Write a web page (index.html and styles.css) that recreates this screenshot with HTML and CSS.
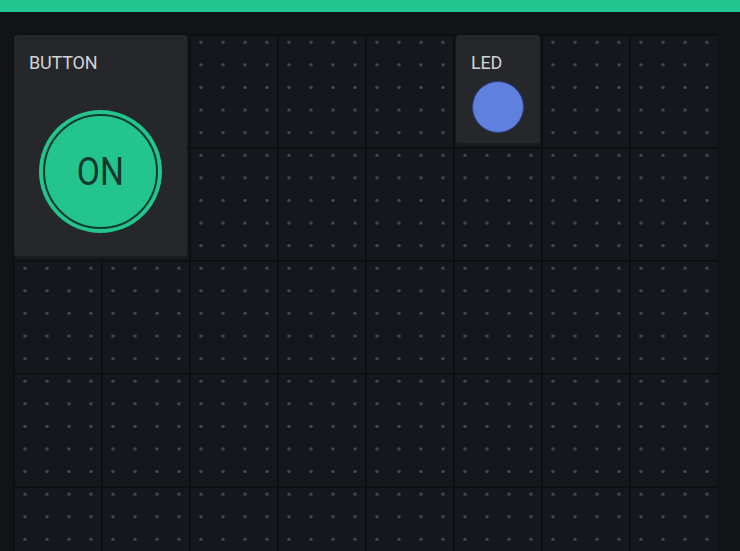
FILE: index.html
```html
<!DOCTYPE html>
<html lang="en">
<head>
    <meta charset="UTF-8">
    <title>Dashboard</title>
    <link rel="stylesheet" href="styles.css">
</head>
<body>
    <div class="topbar"></div>

    <div class="canvas">
        <div class="widget btn-widget">
            <div class="label">BUTTON</div>
            <div class="btn-wrap">
                <div class="big-btn"><span>ON</span></div>
            </div>
        </div>

        <div class="widget led-widget">
            <div class="label">LED</div>
            <div class="led"></div>
        </div>
    </div>
</body>
</html>
```

FILE: styles.css
```css
body { margin: 0; background: #121317; font-family: Roboto, "DejaVu Sans", sans-serif; overflow: hidden; }
.topbar { height: 12px; background: #23c48e; }

.canvas {
    margin: 22px 23px 0 13px;
    height: 517px;
    display: grid;
    grid-template-columns: repeat(8, 88px);
    grid-template-rows: repeat(5, 113px);
    align-content: start;
    background-color: #16171c;
    background-image:
        linear-gradient(to right, #0e0f12 2px, transparent 2px),
        linear-gradient(to bottom, #0e0f12 2px, transparent 2px),
        radial-gradient(circle, #44464c 1.4px, transparent 2px);
    background-size: 88px 113px, 88px 113px, 22px 22.6px;
    background-position: 0 0, 0 0, 1px -3px;
}

.widget {
    background: #25272b;
    border-radius: 3px;
    box-shadow: 0 2px 0 #1c1d21;
    color: #d2d3d5;
    display: flex;
    flex-direction: column;
}
.label { font-size: 18px; letter-spacing: -0.2px; padding: 18px 0 0 15px; line-height: 20px; }

.btn-widget { grid-column: 1 / 3; grid-row: 1 / 3; margin: 1px 2px 4px 1px; }
.btn-wrap { flex: 1; display: flex; justify-content: center; align-items: center; padding-top: 14px; }
.big-btn {
    width: 111px; height: 111px;
    border-radius: 50%;
    background: #23c48e;
    border: 2px solid #0f3d2c;
    box-shadow: 0 0 0 4px #23c48e;
    display: flex; justify-content: center; align-items: center;
}
.big-btn span { font-size: 39px; color: #11382a; transform: scaleX(0.86); }

.led-widget { grid-column: 6 / 7; grid-row: 1 / 2; margin: 1px 1px 4px 3px; }
.led {
    width: 50px; height: 50px;
    border-radius: 50%;
    background: #5f80dd;
    border: 1px solid #2c3f86;
    margin: 8px 0 0 16px;
}
```
